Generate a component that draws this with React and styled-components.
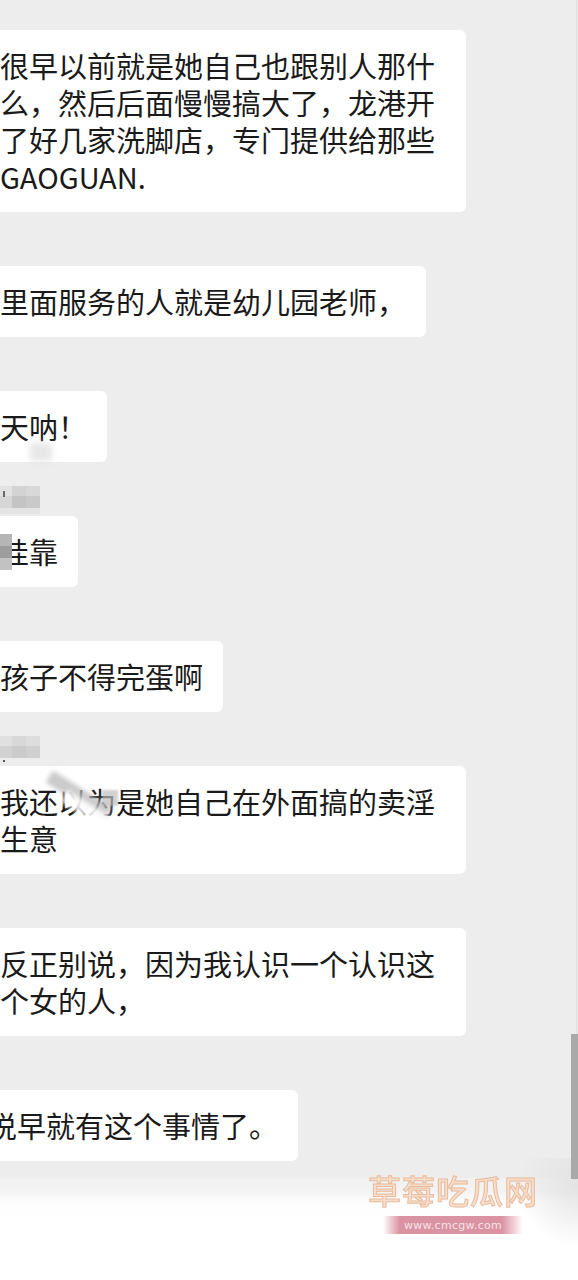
import React from "react";
import styled, { createGlobalStyle } from "styled-components";

const GlobalStyle = createGlobalStyle`
  html, body { margin: 0; padding: 0; background: #ededed; }
  body { font-family: "Noto Sans CJK SC", "Noto Sans", sans-serif; }
`;

const Page = styled.div`
  position: relative;
  width: 578px;
  height: 1280px;
  overflow: hidden;
  display: flex;
  flex-direction: column;
  background: #ededed;
`;

const Thread = styled.div`
  display: flex;
  flex-direction: column;
  gap: 24px;
`;

const Row = styled.div`
  display: flex;
  flex-direction: column;
  align-items: flex-start;
`;

const NameSlot = styled.div`
  height: 30px;
  width: 100%;
  display: flex;
  align-items: flex-start;
`;

const Bubble = styled.div`
  position: relative;
  box-sizing: border-box;
  max-width: 466px;
  margin-left: ${(p) => p.$shift || 0}px;
  padding: 17px 20px 17px 0;
  background: #ffffff;
  border-radius: 0 6px 6px 0;
  color: #1a1a1a;
  font-size: 29px;
  line-height: 37px;
  letter-spacing: 0;
`;

const Overlay = styled.div`
  position: absolute;
  left: ${(p) => p.$x}px;
  top: ${(p) => p.$y}px;
  pointer-events: none;
`;

const Smear = styled.div`
  position: absolute;
  left: ${(p) => p.$x}px;
  top: ${(p) => p.$y}px;
  width: ${(p) => p.$w}px;
  height: ${(p) => p.$h}px;
  background: ${(p) => p.$bg};
  filter: blur(${(p) => p.$blur || 2}px);
  transform: rotate(${(p) => p.$rot || 0}deg);
  pointer-events: none;
`;

const Footer = styled.div`
  position: relative;
  flex: 1;
  margin-top: 17px;
  background: linear-gradient(#f1f1f1 0, #f4f4f4 14px, #fdfdfd 24px, #ffffff 40px);
  &::after {
    content: "";
    position: absolute;
    right: 0;
    top: -20px;
    width: 60px;
    height: 90px;
    background: radial-gradient(ellipse at 100% 30%, rgba(225,225,225,0.9), rgba(240,240,240,0) 70%);
  }
`;

const EdgeLine = styled.div`
  position: absolute;
  right: 1px;
  top: 0;
  width: 1px;
  height: 1160px;
  background: #dedede;
`;

const ScrollThumb = styled.div`
  position: absolute;
  right: 0;
  top: 1034px;
  width: 7px;
  height: 145px;
  background: #a9a9a9;
`;

const Watermark = styled.div`
  position: absolute;
  left: 364px;
  top: 1170px;
  width: 178px;
  display: flex;
  flex-direction: column;
  align-items: center;
  gap: 6px;
  pointer-events: none;
`;

const WmTitle = styled.div`
  font-family: "Noto Sans CJK SC", sans-serif;
  font-size: 33px;
  line-height: 40px;
  font-weight: 500;
  letter-spacing: 1px;
  color: #f9dcc6;
  -webkit-text-stroke: 1px #e7b594;
  opacity: 0.9;
`;

const WmUrl = styled.div`
  width: 140px;
  height: 18px;
  display: flex;
  align-items: center;
  justify-content: center;
  font-family: "DejaVu Sans", sans-serif;
  font-size: 11px;
  letter-spacing: 0.3px;
  color: #f6e4e8;
  background: linear-gradient(90deg, rgba(205,110,130,0) 0%, rgba(205,110,130,0.75) 12%, rgba(210,120,140,0.8) 85%, rgba(205,110,130,0) 100%);
`;

function Mosaic({ cells, w, h }) {
  return (
    <svg width={w} height={h} viewBox={`0 0 ${w} ${h}`} style={{ display: "block" }}>
      {cells.map(([x, y, cw, ch, c], i) => (
        <rect key={i} x={x} y={y} width={cw} height={ch} fill={c} />
      ))}
    </svg>
  );
}

const nameA = [
  [0, 0, 12, 10, "#e2e2e2"],
  [12, 0, 14, 10, "#d3d3d3"],
  [26, 0, 14, 10, "#d8d8d8"],
  [0, 10, 12, 12, "#d6d6d6"],
  [12, 10, 14, 12, "#c4c4c4"],
  [26, 10, 14, 12, "#c9c9c9"],
  [0, 22, 40, 6, "#e4e4e4"],
  [3, 5, 2, 6, "#6a6a6a"],
];

const nameB = [
  [0, 0, 12, 10, "#e0e0e0"],
  [12, 0, 14, 10, "#d8d8d8"],
  [26, 0, 14, 10, "#dddddd"],
  [0, 10, 12, 12, "#d2d2d2"],
  [12, 10, 14, 12, "#cbcbcb"],
  [26, 10, 14, 12, "#d0d0d0"],
  [3, 24, 2, 2, "#555555"],
];

const wowCover = [
  [0, 0, 12, 12, "#b5b5b5"],
  [0, 12, 12, 12, "#9d9d9d"],
  [0, 24, 12, 12, "#c2c2c2"],
];

export default function App() {
  return (
    <>
      <GlobalStyle />
      <Page>
        <Thread>
          <Row>
            <NameSlot />
            <Bubble>
              很早以前就是她自己也跟别人那什么，然后后面慢慢搞大了，龙港开了好几家洗脚店，专门提供给那些GAOGUAN.
            </Bubble>
          </Row>
          <Row>
            <NameSlot />
            <Bubble>里面服务的人就是幼儿园老师，</Bubble>
          </Row>
          <Row>
            <NameSlot />
            <Bubble>
              天呐！
              <Smear $x={30} $y={52} $w={22} $h={18} $bg="rgba(215,215,215,0.6)" $blur={3} />
            </Bubble>
          </Row>
          <Row>
            <NameSlot>
              <Mosaic w={40} h={28} cells={nameA} />
            </NameSlot>
            <Bubble>
              哇靠
              <Overlay $x={0} $y={18}>
                <Mosaic w={12} h={36} cells={wowCover} />
              </Overlay>
            </Bubble>
          </Row>
          <Row>
            <NameSlot />
            <Bubble>孩子不得完蛋啊</Bubble>
          </Row>
          <Row>
            <NameSlot>
              <Mosaic w={40} h={28} cells={nameB} />
            </NameSlot>
            <Bubble>
              我还以为是她自己在外面搞的卖淫生意
              <Smear $x={44} $y={22} $w={70} $h={14} $rot={32} $bg="rgba(185,185,185,0.75)" $blur={2} />
              <Smear $x={60} $y={36} $w={50} $h={14} $rot={32} $bg="rgba(255,255,255,0.85)" $blur={2} />
              <Smear $x={102} $y={24} $w={16} $h={16} $bg="rgba(190,190,190,0.7)" $blur={1} />
            </Bubble>
          </Row>
          <Row>
            <NameSlot />
            <Bubble>反正别说，因为我认识一个认识这个女的人，</Bubble>
          </Row>
          <Row>
            <NameSlot />
            <Bubble $shift={-12}>说早就有这个事情了。</Bubble>
          </Row>
        </Thread>
        <Footer />
        <EdgeLine />
        <ScrollThumb />
        <Watermark>
          <WmTitle>草莓吃瓜网</WmTitle>
          <WmUrl>www.cmcgw.com</WmUrl>
        </Watermark>
      </Page>
    </>
  );
}
